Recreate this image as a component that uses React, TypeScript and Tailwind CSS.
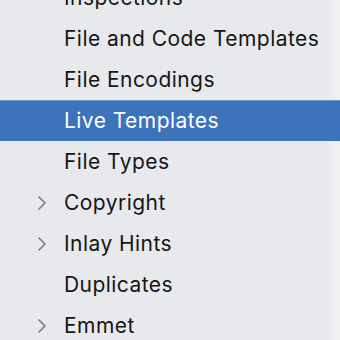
import React from "react";

const items: { label: string; chevron?: boolean; selected?: boolean }[] = [
  { label: "Inspections" },
  { label: "File and Code Templates" },
  { label: "File Encodings" },
  { label: "Live Templates", selected: true },
  { label: "File Types" },
  { label: "Copyright", chevron: true },
  { label: "Inlay Hints", chevron: true },
  { label: "Duplicates" },
  { label: "Emmet", chevron: true },
];

function Chevron() {
  return (
    <svg width="12" height="16" viewBox="0 0 12 16" className="text-[#7d7f82]">
      <path d="M3 2 L9 8 L3 14" fill="none" stroke="currentColor" strokeWidth="1.7" strokeLinecap="round" strokeLinejoin="round" />
    </svg>
  );
}

export default function App() {
  return (
    <div className="w-[340px] h-[340px] overflow-hidden bg-[#e7e9ec] relative" style={{ fontFamily: "Inter, 'Noto Sans', sans-serif" }}>
      <div className="absolute right-0 top-0 bottom-0 w-[14px] bg-gradient-to-r from-[#e7e9ec] to-[#eef0f2]" />
      <div className="relative -mt-[23px] flex flex-col">
        {items.map((it) => (
          <div
            key={it.label}
            className={
              "h-[41px] flex items-center text-[21px] font-normal " +
              (it.selected ? "bg-[#3c73ba] text-white border-t border-[#7099cf]" : "text-[#161616]")
            }
          >
            <div className="w-[64px] flex items-center pl-[36px] shrink-0">{it.chevron ? <Chevron /> : null}</div>
            <span className="whitespace-nowrap tracking-[0.45px]">{it.label}</span>
          </div>
        ))}
      </div>
    </div>
  );
}
